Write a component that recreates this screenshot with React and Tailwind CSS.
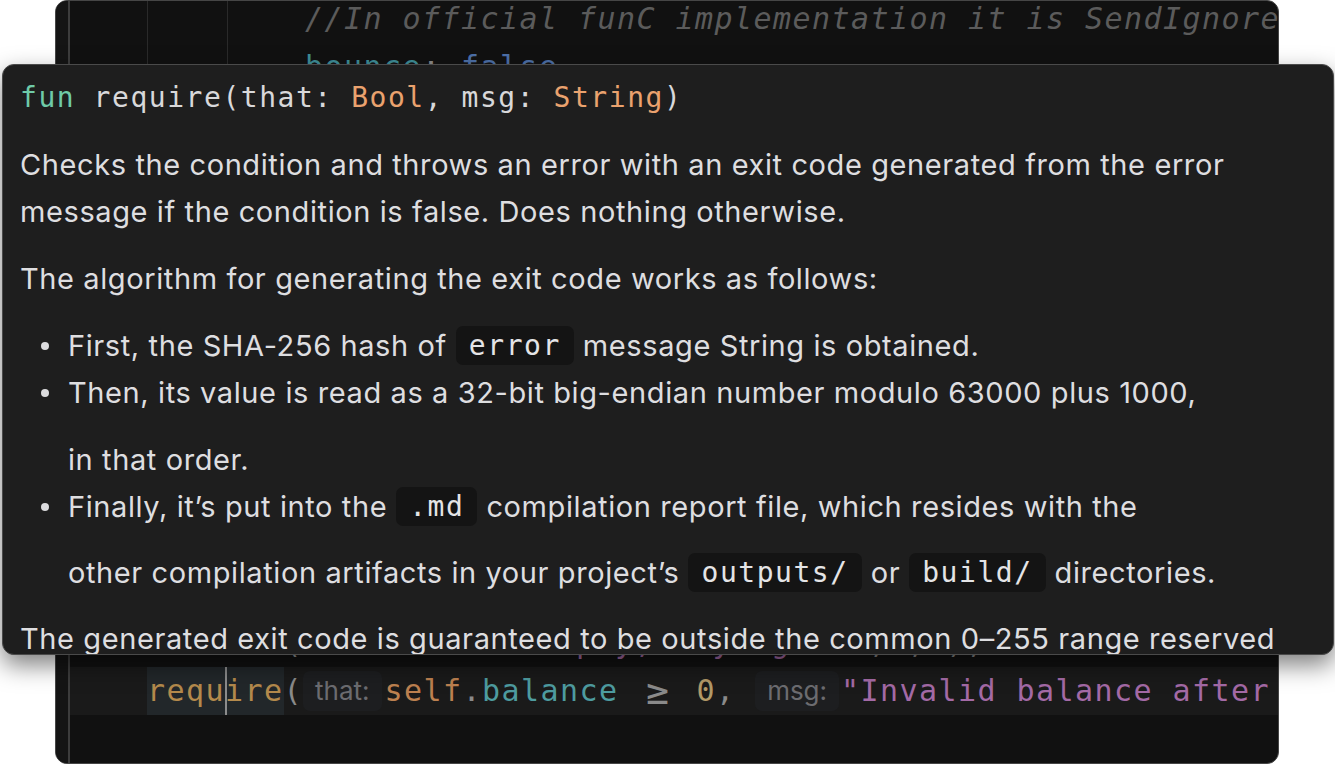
import React from 'react';

const mono = "font-['DejaVu_Sans_Mono',monospace]";
const sans = "font-['Inter','Noto_Sans',sans-serif]";

// inline code inside the hover doc
function Code({ children }) {
    return (
        <span className={`${mono} text-[28px] tracking-[1.54px] text-[#e4e4e6] bg-[#141414] rounded-[7px] h-[39px] px-[13px] mx-[9px] flex items-center`}>
            {children}
        </span>
    );
}

function DocLine({ children, className = '' }) {
    return <div className={`flex items-center h-[47px] whitespace-pre ${className}`}>{children}</div>;
}

function Bullet({ children, className = '' }) {
    return (
        <DocLine className={className}>
            <span className="w-[48px] shrink-0 flex pl-[21px]">
                <span className="w-[8px] h-[8px] rounded-full bg-[#dcdcde]" />
            </span>
            {children}
        </DocLine>
    );
}

function Hint({ children }) {
    return (
        <span className={`${sans} text-[26px] tracking-normal text-[#6c6c70] bg-[#1d1e20] rounded-[7px] h-[40px] px-[12px] flex items-center`}>
            {children}
        </span>
    );
}

function Indent({ levels }) {
    return (
        <>
            <span className="w-[77px] shrink-0 self-stretch" />
            {levels > 1 && <span className="w-[80px] shrink-0 self-stretch border-l border-[#2a2a2a]" />}
            {levels > 2 && <span className="w-[78px] shrink-0 self-stretch border-l border-[#2a2a2a]" />}
        </>
    );
}

function CodeLine({ levels = 1, children, className = '' }) {
    return (
        <div className={`flex items-center h-[48px] shrink-0 whitespace-pre overflow-hidden ${className}`}>
            <Indent levels={levels} />
            {children}
        </div>
    );
}

export default function App() {
    const filler = [
        ['mode: SendRemainingValue,', 2],
        ['body: Transfer{ amount: amount }.toCell(),', 2],
        ['});', 1],
        ['', 1],
        ['self.balance = self.balance - amount;', 1],
        ['self.lastUpdate = now();', 1],
        ['', 1],
        ['let fee: Int = ton("0.05");', 1],
        ['self.balance = self.balance - fee;', 1],
        ['emit(BalanceChanged{ value: self.balance }.toCell());', 1],
        ['', 1],
    ];

    return (
        <div className="relative w-[1335px] h-[764px] bg-white overflow-hidden">
            {/* Editor */}
            <div className={`ml-[55px] w-[1224px] h-[764px] rounded-[12px] border border-[#464646] bg-[#111111] overflow-hidden flex ${mono} text-[30px] tracking-[1.44px] leading-[48px]`}>
                <div className="w-[12px] shrink-0 bg-[#151515]" />
                <div className="w-[2px] shrink-0 bg-[#3d3d3d]" />
                <div className="flex-1 min-w-0 -mt-[6px] flex flex-col">
                    <CodeLine levels={3}>
                        <span className="italic text-[#5b5b5b]">//In official funC implementation it is SendIgnoreErrors</span>
                    </CodeLine>
                    <CodeLine levels={3}>
                        <span className="text-[#3f8e98]">bounce</span>
                        <span className="text-[#8a8a8a]">: </span>
                        <span className="text-[#4d70a8]">false</span>
                    </CodeLine>
                    {filler.map(([text, lv], i) => (
                        <CodeLine key={i} levels={lv}>
                            <span className="text-[#9a9a9a]">{text}</span>
                        </CodeLine>
                    ))}
                    <CodeLine>
                        <span className="text-[#9a9a9a]">throwIf(</span>
                        <span className="text-[#a46aa6]">"Balance is empty, try again"</span>
                        <span className="text-[#8a8a8a]">, , );</span>
                    </CodeLine>
                    <CodeLine className="bg-[#1a1a1a]">
                        <span className="relative self-stretch flex items-center bg-[#22272a] text-[#b48a4c]">
                            require
                            <span className="absolute left-[78px] top-0 w-[2px] h-full bg-[#8c8c8c]" />
                        </span>
                        <span className="text-[#8a8a8a]">(</span>
                        <Hint>that:</Hint>
                        <span className="ml-[3px] text-[#bd8150]">self</span>
                        <span className="text-[#8a8a8a]">.</span>
                        <span className="text-[#4e9ca0]">balance</span>
                        <span className="text-[#8a8a8a]"> </span>
                        <span className="w-[39px] text-center tracking-normal text-[38px] text-[#8a8a8a]">≥</span>
                        <span className="text-[#8a8a8a]"> </span>
                        <span className="text-[#b39a68]">0</span>
                        <span className="text-[#8a8a8a]">, </span>
                        <Hint>msg:</Hint>
                        <span className="ml-[2px] text-[#a46aa6]">"Invalid balance after</span>
                    </CodeLine>
                    <CodeLine />
                </div>
            </div>

            {/* Hover documentation */}
            <div className={`absolute left-[2px] top-[64px] w-[1332px] h-[591px] rounded-[12px] border border-[#4a4a4a] bg-[#1e1e1e] shadow-[0_10px_24px_rgba(0,0,0,0.5)] overflow-hidden pl-[17px] pt-[9px] ${sans} text-[29px] tracking-[0.6px] text-[#dedee0]`}>
                <DocLine className={`${mono} text-[28px] tracking-[1.54px] text-[#d8d8da]`}>
                    <span className="text-[#6fcaa8]">fun</span>
                    <span> require(that: </span>
                    <span className="text-[#eaa26e]">Bool</span>
                    <span>, msg: </span>
                    <span className="text-[#eaa26e]">String</span>
                    <span>)</span>
                </DocLine>

                <DocLine className="mt-[20px]">Checks the condition and throws an error with an exit code generated from the error</DocLine>
                <DocLine className="h-[46px]">message if the condition is false. Does nothing otherwise.</DocLine>

                <DocLine className="mt-[20px]">The algorithm for generating the exit code works as follows:</DocLine>

                <Bullet className="mt-[20px]">
                    <span>First, the SHA-256 hash of</span>
                    <Code>error</Code>
                    <span>message String is obtained.</span>
                </Bullet>
                <Bullet>
                    <span>Then, its value is read as a 32-bit big-endian number modulo 63000 plus 1000,</span>
                </Bullet>
                <DocLine className="mt-[20px] pl-[48px]">in that order.</DocLine>
                <Bullet>
                    <span>Finally, it’s put into the</span>
                    <Code>.md</Code>
                    <span>compilation report file, which resides with the</span>
                </Bullet>
                <DocLine className="mt-[19px] pl-[48px]">
                    <span>other compilation artifacts in your project’s</span>
                    <Code>outputs/</Code>
                    <span>or</span>
                    <Code>build/</Code>
                    <span>directories.</span>
                </DocLine>

                <DocLine className="mt-[19px]">The generated exit code is guaranteed to be outside the common 0–255 range reserved</DocLine>
            </div>
        </div>
    );
}
